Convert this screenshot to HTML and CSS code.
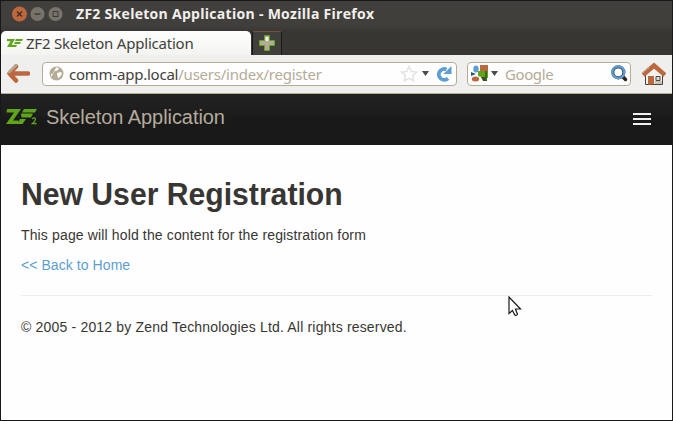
FILE: index.html
```html
<!DOCTYPE html>
<html lang="en">
<head>
<meta charset="utf-8">
<title>ZF2 Skeleton Application</title>
<link rel="stylesheet" href="styles.css">
</head>
<body>
<div class="window">
  <header class="titlebar">
    <svg class="controls" width="54" height="18" viewBox="0 0 54 18">
      <circle cx="8.500" cy="9" r="7.500" fill="#bd673f"/>
      <path d="M6 6.500l5 5M11 6.500l-5 5" stroke="#3b2a22" stroke-width="1.200"/>
      <circle cx="26.500" cy="9" r="7" fill="#77736a"/>
      <path d="M23.500 9h6" stroke="#3c3b37" stroke-width="1.500"/>
      <circle cx="44.500" cy="9" r="7" fill="#77736a"/>
      <path d="M42 6.500h5v5h-5z" stroke="#3c3b37" fill="none"/>
    </svg>
    <span class="title">ZF2 Skeleton Application - Mozilla Firefox</span>
  </header>
  <div class="tabs">
    <div class="tab">
      <svg width="16" height="10" viewBox="0 0 16 10" fill="#5fa51b"><path d="M0 1h8L4.500 6.800H7V9H0l3.500-5.800H0zM9 1h7l-1 2H8zM8 4h6l-1 2H7zM7 7h3l-1 2H6z"/></svg>
      <span class="tab-name">ZF2 Skeleton Application</span>
    </div>
    <div class="new-tab">
      <svg width="16" height="16" viewBox="0 0 16 16"><path d="M5.500.500h5v5h5v5h-5v5h-5v-5h-5v-5h5z" fill="#b5ac97" stroke="#5fa51b"/><path d="M6.500 2h3v4h-3z" fill="#eee"/></svg>
    </div>
  </div>
  <div class="toolbar">
    <svg class="back" width="23" height="19" viewBox="0 0 23 19"><path d="M9 2.500 2.500 9.500 9 16.500M3.500 9.500H21" fill="none" stroke="#bd673f" stroke-width="4.500" stroke-linecap="round" stroke-linejoin="round"/><path d="M2 8 9 1.500" stroke="#b5a995" stroke-width="2.500" stroke-linecap="round"/></svg>
    <div class="field address">
      <svg class="globe" width="15" height="15" viewBox="0 0 15 15"><circle cx="7.500" cy="7.500" r="7" fill="#b5ac97"/><path d="M7 1.500 10 2 8.500 4.500 6 5 4.500 7.500 2 8l.500 3M8 7l4-1 1 2-2 2.500-1.500 2L8 9z" fill="#fff"/></svg>
      <span class="url"><b>comm-app.local</b>/users/index/register</span>
      <svg class="star" width="18" height="17" viewBox="0 0 18 17"><path d="m9 1.500 2.300 5 5.200.6-3.900 3.500 1.100 5.200L9 13.300l-4.700 2.500 1.100-5.200L1.500 7.100l5.200-.6z" fill="#fff" stroke="#e2e2e2" stroke-width="1.500"/></svg>
      <svg class="arrow" width="7" height="5" viewBox="0 0 7 5"><path d="M0 0h7L3.500 5z" fill="#4d4943"/></svg>
      <svg class="reload" width="16" height="16" viewBox="0 0 16 16"><path d="M12 12.300A5.400 5.400 0 1 1 10.500 3.500" fill="none" stroke="#5c9ed2" stroke-width="3.800"/><path d="M15.500 0v8H7.500z" fill="#5c9ed2"/></svg>
    </div>
    <div class="field search">
      <svg class="engine" width="17" height="17" viewBox="0 0 17 17"><path d="M9 0h8v6H9z" fill="#bd673f"/><path d="M7 6h10v7h-4l-6-2z" fill="#5fa51b"/><path d="M10 12h6v4h-4z" fill="#3e4b24"/><path d="M14 6h2v9h-2z" fill="#3e6b24"/><path d="m0 7 5 2-5 2z" fill="#29567f"/><ellipse cx="5" cy="4" rx="2.700" ry="3.500" fill="#5c9ed2"/><ellipse cx="4.500" cy="14" rx="3.700" ry="2.500" fill="#bd673f"/></svg>
      <svg class="arrow" width="7" height="5" viewBox="0 0 7 5"><path d="M0 0h7L3.500 5z" fill="#4d4943"/></svg>
      <span class="placeholder">Google</span>
      <svg class="lens" width="17" height="17" viewBox="0 0 17 17"><path d="m11.500 11.500 3 3" stroke="#292521" stroke-width="3.500" stroke-linecap="round"/><circle cx="7.300" cy="7.300" r="5.500" fill="#fff" stroke="#4a5560" stroke-width="3.200"/><circle cx="7.300" cy="7.300" r="6" fill="none" stroke="#5c9ed2" stroke-width="2.200"/></svg>
    </div>
    <svg class="home" width="24" height="24" viewBox="0 0 24 24"><path d="M3.500 10 12 3l8.500 7v12.500h-17z" fill="#f4f2ef" stroke="#4a4038"/><path d="M2.800 11.500 12 3.500l9.200 8" fill="none" stroke="#bd673f" stroke-width="4.600" stroke-linejoin="miter" stroke-linecap="square"/><path d="M6 14h6v8.500H6z" fill="#bd673f"/><path d="M14 14.500h4v4h-4z" fill="#ddd" stroke="#4a4038"/><path d="M1 10.500 7 5.500" stroke="#b5a995" stroke-width="1.500" stroke-dasharray="2 1"/><path d="M13 19h7v3h-7z" fill="#c9c3b7"/></svg>
  </div>
  <nav class="navbar">
    <svg class="logo" width="32" height="18" viewBox="0 0 32 18" fill="#5fa51b"><path d="M1 1h14L7 12.500h5.500V16H0L8 4.500H.500zM18 1h13l-2 3.500H16zM15 5.500h12l-2 4H15.500zM14 11h6l-3.500 5h-5z"/><path d="M26 10.700q3.500-2 3.500.600 0 1.700-3 4.200h4" fill="none" stroke="#5fa51b" stroke-width="1.300"/></svg>
    <span class="brand">Skeleton Application</span>
    <svg class="menu" width="18" height="12" viewBox="0 0 18 12" fill="#f2f0ef"><path d="M0 0h18v2H0zM0 5h18v2H0zM0 10h18v2H0z"/></svg>
  </nav>
  <main class="content">
    <h1><span>New User Registration</span></h1>
    <p class="intro">This page will hold the content for the registration form</p>
    <p class="link"><a>&lt;&lt; Back to Home</a></p>
    <footer class="footer">© 2005 - 2012 by Zend Technologies Ltd. All rights reserved.</footer>
  </main>
  <svg class="cursor" width="14" height="21" viewBox="0 0 14 21"><path d="M1 1v16.500l3.500-3 2.300 4.500q1.500 1 2.700-.500L7.500 13h5z" fill="#fff" stroke="#191919" stroke-width="1.200"/></svg>
</div>
</body>
</html>
```
FILE: styles.css
```css
* { box-sizing: border-box; }
body { margin: 0; font-family: "Liberation Sans", Arial, sans-serif; }
svg { display: block; flex: none; }
span { white-space: nowrap; }
.window { position: relative; width: 673px; height: 421px; border: 1px solid #181818; background: #fefefe; overflow: hidden; }
.titlebar { height: 30px; display: flex; align-items: center; padding: 0 0 4px 10px; background: linear-gradient(#413f3c 80%, #3a3835); }
.title { margin: -2px 0 0 11px; font: bold 14px "Open Sans", sans-serif; letter-spacing: .29px; color: #f2f0ec; }
.tabs { height: 24px; display: flex; background: #383633; }
.tab { width: 250px; padding: 0 0 0 6px; display: flex; align-items: center; border-radius: 5px 5px 0 0; background: linear-gradient(#fefefe, #f3f4f0); }
.tab-name { margin-left: 3px; font: 15px "Noto Sans", sans-serif; letter-spacing: -.21px; color: #413f3c; }
.new-tab { width: 30px; margin-left: 1px; padding: 3px 0 0 6px; border: 1px solid #191816; border-top-color: #75513e; border-bottom: 0; border-radius: 3px 3px 0 0; background: #413f3c; }
.toolbar { height: 39px; display: flex; align-items: center; padding: 0 0 1px 6px; background: #eff0ed; border-bottom: 1px solid #b5ac97; }
.field { height: 24px; display: flex; align-items: center; border: 1px solid #b5ac97; border-radius: 4px; background: #fefefe; }
.address { width: 415px; margin-left: 12px; padding-left: 6px; }
.url { width: 328px; margin-left: 5px; font: 15px "Noto Sans", sans-serif; letter-spacing: -.23px; color: #b5ac97; }
.url b { font-weight: 400; color: #413f3c; }
.star { margin-left: 3px; }
.address .arrow { margin-left: 4px; }
.reload { margin-left: 7px; }
.search { width: 164px; margin-left: 10px; padding-left: 3px; }
.search .arrow { margin-left: 3px; }
.placeholder { width: 106px; margin-left: 7px; font: 15px "Noto Sans", sans-serif; letter-spacing: -.4px; color: #b5ac97; }
.home { margin-left: 11px; }
.navbar { height: 51px; display: flex; align-items: flex-start; padding: 14px 21px 0 5px; background: linear-gradient(#222 0, #1c1c1c 22px, #191919 24px); }
.brand { margin: -3px 0 0 8px; font-size: 20px; line-height: 24px; letter-spacing: -.06px; color: #b5ac9d; }
.menu { margin: 5px 0 0 auto; }
.content { padding: 30px 20px 0; font-size: 14px; line-height: 20px; color: #383633; }
h1 { margin: 0; font-size: 32px; line-height: 38px; padding-bottom: 2px; }
h1 span { display: inline-block; transform: scaleX(.942); transform-origin: 0 50%; }
p { margin: 10px 0 0; }
.intro { letter-spacing: .14px; }
.link { letter-spacing: .07px; }
a { color: #5c9ed2; }
.footer { margin-top: 20px; padding-top: 21px; border-top: 1px solid #ededed; letter-spacing: .18px; }
.cursor { position: absolute; left: 507px; top: 295px; }
```
